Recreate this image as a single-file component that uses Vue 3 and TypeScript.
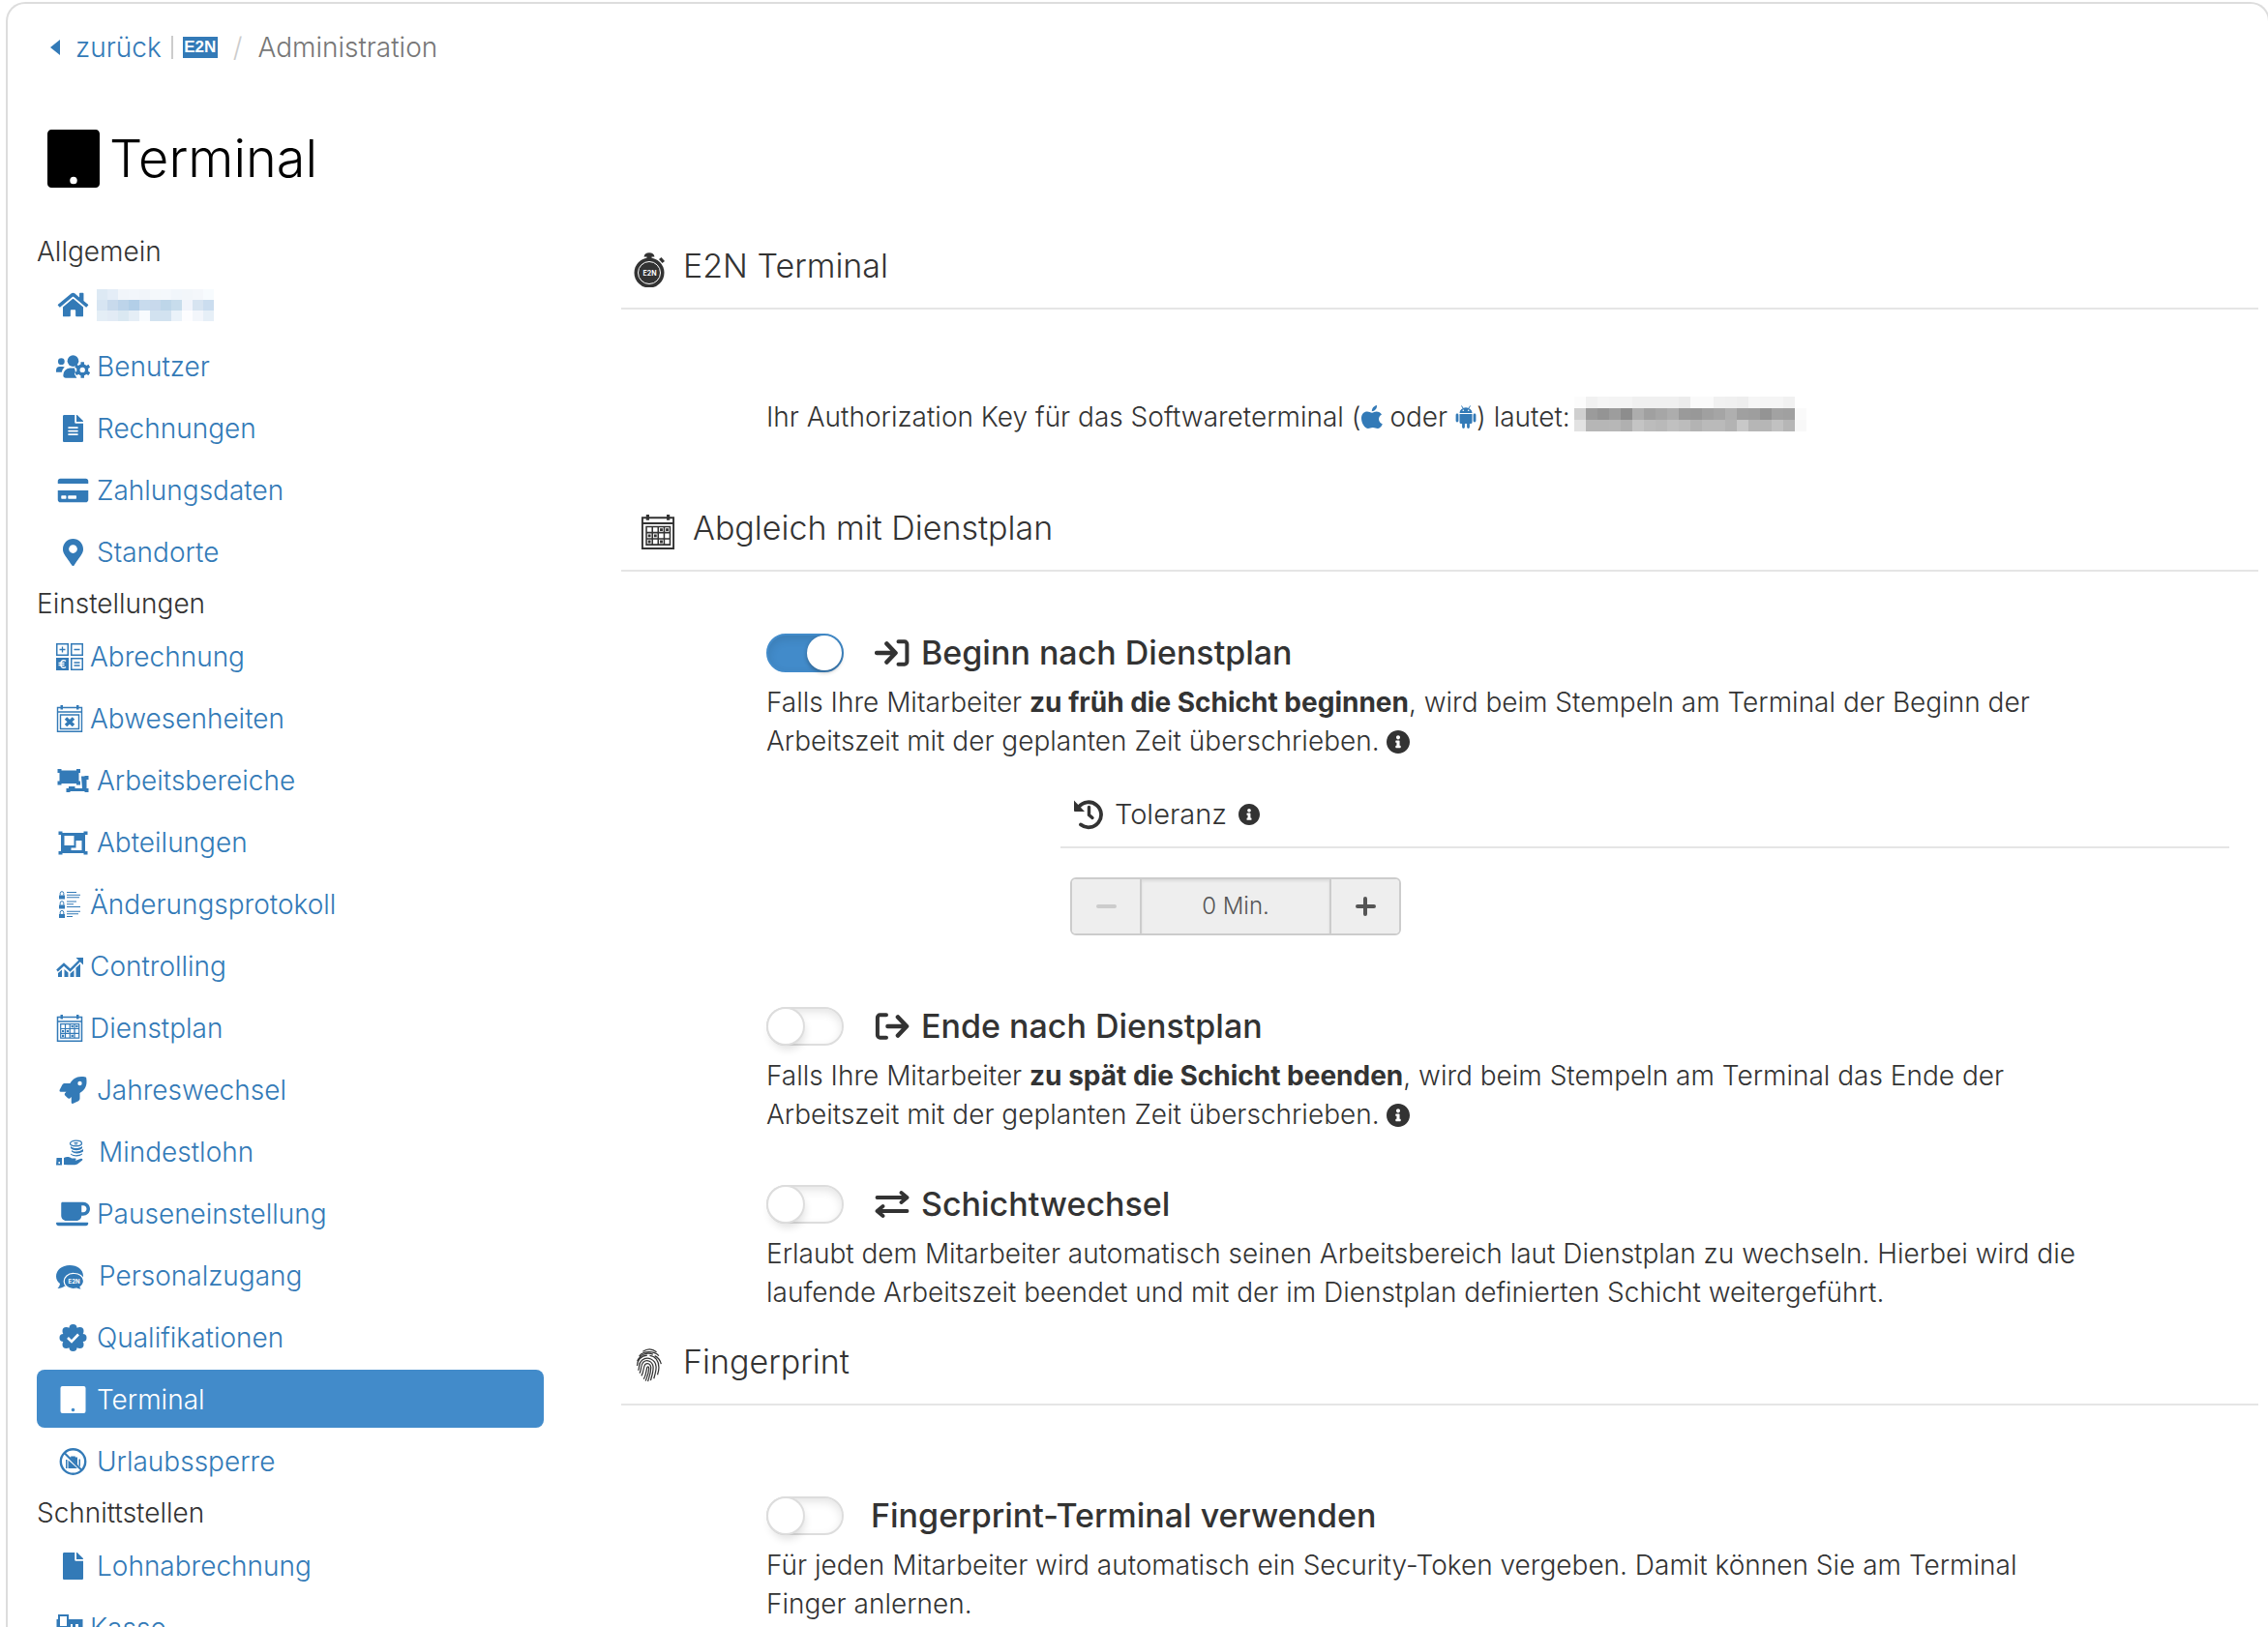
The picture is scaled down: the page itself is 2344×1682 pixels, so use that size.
<script setup lang="ts">
import { ref } from 'vue'

interface NavItem {
  label: string
  icon: string
  kind: 'wide' | 'plain' | 'spaced'
  active?: boolean
}
interface NavGroup {
  title: string
  items: NavItem[]
}

const groups: NavGroup[] = [
  {
    title: 'Allgemein',
    items: [
      { label: '', icon: 'home', kind: 'wide' },
      { label: 'Benutzer', icon: 'users', kind: 'wide' },
      { label: 'Rechnungen', icon: 'invoice', kind: 'wide' },
      { label: 'Zahlungsdaten', icon: 'card', kind: 'wide' },
      { label: 'Standorte', icon: 'pin', kind: 'wide' },
    ],
  },
  {
    title: 'Einstellungen',
    items: [
      { label: 'Abrechnung', icon: 'calc', kind: 'plain' },
      { label: 'Abwesenheiten', icon: 'absence', kind: 'plain' },
      { label: 'Arbeitsbereiche', icon: 'ungroup', kind: 'wide' },
      { label: 'Abteilungen', icon: 'group', kind: 'wide' },
      { label: 'Änderungsprotokoll', icon: 'log', kind: 'plain' },
      { label: 'Controlling', icon: 'chart', kind: 'plain' },
      { label: 'Dienstplan', icon: 'calendar', kind: 'plain' },
      { label: 'Jahreswechsel', icon: 'rocket', kind: 'wide' },
      { label: 'Mindestlohn', icon: 'coins', kind: 'spaced' },
      { label: 'Pauseneinstellung', icon: 'cup', kind: 'wide' },
      { label: 'Personalzugang', icon: 'chat', kind: 'spaced' },
      { label: 'Qualifikationen', icon: 'badge', kind: 'wide' },
      { label: 'Terminal', icon: 'tablet', kind: 'wide', active: true },
      { label: 'Urlaubssperre', icon: 'nobag', kind: 'wide' },
    ],
  },
  {
    title: 'Schnittstellen',
    items: [
      { label: 'Lohnabrechnung', icon: 'file', kind: 'wide' },
      { label: 'Kasse', icon: 'register', kind: 'plain' },
    ],
  },
]

const icons: Record<string, { box: string; body: string }> = {
  home: {
    box: '0 0 576 512',
    body: '<path d="M280.37 148.26L96 300.11V464a16 16 0 0 0 16 16l112.06-.29a16 16 0 0 0 15.92-16V368a16 16 0 0 1 16-16h64a16 16 0 0 1 16 16v95.64a16 16 0 0 0 16 16.05L464 480a16 16 0 0 0 16-16V300L295.67 148.26a12.19 12.19 0 0 0-15.3 0zM571.6 251.47L488 182.56V44.05a12 12 0 0 0-12-12h-56a12 12 0 0 0-12 12v72.61L318.47 43a48 48 0 0 0-61 0L4.34 251.47a12 12 0 0 0-1.6 16.9l25.5 31A12 12 0 0 0 45.15 301l235.22-193.74a12.19 12.19 0 0 1 15.3 0L530.9 301a12 12 0 0 0 16.9-1.6l25.5-31a12 12 0 0 0-1.7-16.93z"/>',
  },
  users: {
    box: '0 0 36 28',
    body: '<circle cx="5.500" cy="8.500" r="3.500"/><circle cx="18" cy="8" r="6"/><path d="M0 20v-2a4 4 0 0 1 4-4h3a4 4 0 0 1 2 .6A9 9 0 0 0 6 20zM7.500 23.500a7.500 7.500 0 0 1 7-8h5a7 7 0 0 1 0 6.500l2.500 4h-12a2.500 2.500 0 0 1-2.500-2.500z"/><circle cx="28" cy="17.500" r="4.500" fill="none" stroke="currentColor" stroke-width="3.500"/><path d="M28 9v3M28 23v3M20.700 13.200l2.600 1.500M32.700 20.300l2.600 1.500M20.700 21.800l2.600-1.500M32.700 14.700l2.600-1.500" stroke="currentColor" stroke-width="3.600"/>',
  },
  invoice: {
    box: '0 0 384 512',
    body: '<path d="M224 136V0H24C10.700 0 0 10.700 0 24v464c0 13.300 10.700 24 24 24h336c13.300 0 24-10.700 24-24V160H248c-13.200 0-24-10.800-24-24zm64 236c0 6.600-5.400 12-12 12H108c-6.600 0-12-5.400-12-12v-8c0-6.600 5.400-12 12-12h168c6.600 0 12 5.400 12 12v8zm0-64c0 6.600-5.400 12-12 12H108c-6.600 0-12-5.400-12-12v-8c0-6.600 5.400-12 12-12h168c6.600 0 12 5.400 12 12v8zm0-72v8c0 6.600-5.400 12-12 12H108c-6.600 0-12-5.400-12-12v-8c0-6.600 5.400-12 12-12h168c6.600 0 12 5.400 12 12zm96-114.100v6.100H256V0h6.100c6.400 0 12.500 2.500 17 7l97.900 98c4.500 4.500 7 10.600 7 16.900z"/>',
  },
  file: {
    box: '0 0 384 512',
    body: '<path d="M224 136V0H24C10.700 0 0 10.700 0 24v464c0 13.300 10.700 24 24 24h336c13.300 0 24-10.700 24-24V160H248c-13.200 0-24-10.800-24-24zm160-14.100v6.100H256V0h6.100c6.400 0 12.500 2.500 17 7l97.900 98c4.500 4.500 7 10.600 7 16.900z"/>',
  },
  card: {
    box: '0 0 576 512',
    body: '<path d="M0 432c0 26.500 21.500 48 48 48h480c26.500 0 48-21.500 48-48V256H0v176zm192-68c0-6.600 5.400-12 12-12h136c6.600 0 12 5.400 12 12v40c0 6.600-5.400 12-12 12H204c-6.600 0-12-5.400-12-12v-40zm-128 0c0-6.600 5.400-12 12-12h72c6.600 0 12 5.400 12 12v40c0 6.600-5.400 12-12 12H76c-6.600 0-12-5.400-12-12v-40zM576 80v48H0V80c0-26.500 21.500-48 48-48h480c26.500 0 48 21.500 48 48z"/>',
  },
  pin: {
    box: '0 0 384 512',
    body: '<path d="M172.268 501.670C26.970 291.031 0 269.413 0 192 0 85.961 85.961 0 192 0s192 85.961 192 192c0 77.413-26.970 99.031-172.268 309.670-9.535 13.774-29.930 13.773-39.464 0zM192 272c44.183 0 80-35.817 80-80s-35.817-80-80-80-80 35.817-80 80 35.817 80 80 80z"/>',
  },
  calc: {
    box: '0 0 28 28',
    body: '<path d="M.75.75h11.500v11.500H.75zM15.750.75h11.500v11.500h-11.500zM15.750 15.750h11.500v11.500h-11.500z" fill="none" stroke="currentColor" stroke-width="1.500"/><path d="M0 15h13v13H0z"/><path d="M3.500 6.500h6M6.500 3.500v6M18.500 6.500h6M18.500 20h6M18.500 23h6" stroke="currentColor" stroke-width="1.300"/><path d="M10 18.500a3.200 3.200 0 0 0-5 1v4a3.200 3.200 0 0 0 5 1M2.500 20.500h6M2.500 22.700h6" fill="none" stroke="#fff" stroke-width="1.300"/>',
  },
  absence: {
    box: '0 0 28 28',
    body: '<path d="M1.500 2.500h25v24.700h-25zM1.500 7h25M4.500 10h19v14.500h-19z" fill="none" stroke="currentColor" stroke-width="1.400"/><path d="M4.500 0h2.500v4.500H4.500zM21 0h2.500v4.500H21z"/><path d="M10 13.500l8 7.500M18 13.500l-8 7.500" stroke="currentColor" stroke-width="3.600"/>',
  },
  calendar: {
    box: '0 0 28 28',
    body: '<path d="M1.500 2.500h25v24.700h-25zM1.500 7h25" fill="none" stroke="currentColor" stroke-width="1.500"/><path d="M4.500 0h2.500v4.500H4.500zM21 0h2.500v4.500H21z"/><path d="M4.700 9.700h19v14.500h-19zM4.700 14.500h19M4.700 19.400h19M9.500 9.700v14.500M14.200 9.700v14.500M19 9.700v14.500" fill="none" stroke="currentColor" stroke-width="1.200"/><path d="M15.600 11h2.200v2.200h-2.200zM20.300 11h2.200v2.200h-2.200zM6 15.900h2.200v2.200H6zM10.800 15.900H13v2.200h-2.200zM6 20.700h2.200v2.200H6zM15.600 20.700h2.200v2.200h-2.200z"/>',
  },
  ungroup: {
    box: '0 0 32 28',
    body: '<path d="M2 3.500h20v13.500H2z"/><path d="M0 2h4v4H0zM19.500 2h4v4h-4zM0 14.500h4v4H0zM19.500 14.500h4v4h-4zM24.500 9.500H30v15.500H11.500v-5H18v2h7.500z"/><path d="M28 9h4v4h-4zM28 22h4v4h-4zM9 22h4v4H9z"/>',
  },
  group: {
    box: '0 0 30 28',
    body: '<path fill-rule="evenodd" d="M2.500 4h25v21h-25zM6 7v10h10V7zM18 12v7.500h-5V22h11V12z"/><path d="M0 2.500h4v3.500H0zM26 2.500h4v3.500h-4zM0 23h4v3.500H0zM26 23h4v3.500h-4z"/>',
  },
  log: {
    box: '0 0 28 28',
    body: '<path d="M3 4.500h6v4H3zM3 14.500h6v4H3zM3 24h6v4H3z"/><path d="M4.200 4.500v-2a1.800 1.800 0 0 1 3.600 0v2M4.200 14.500v-2a1.800 1.800 0 0 1 3.600 0v2M4.200 24.200v-2a1.800 1.800 0 0 1 3.600 0v2" fill="none" stroke="currentColor" stroke-width="1"/><path d="M11 1.500h10M11 4.200h14M11 6.800h13M11 11h10M11 13.700h7M11 16.500h14M11 21.200h14M11 23.800h12M11 26.500h6" stroke="currentColor" stroke-width="1.100"/>',
  },
  chart: {
    box: '0 0 28 28',
    body: '<path d="M1 18.500L8 12l6.500 6L24.500 8" fill="none" stroke="currentColor" stroke-width="2.400"/><path d="M20.500 5H28v7.500zM2 21l4-3.500v7.500H2zM8.500 17l4 3.500V25h-4zM14.500 21.500l4-3.500v7h-4zM20.500 15.500l4.500-4V25h-4.500z"/>',
  },
  rocket: {
    box: '0 0 512 512',
    body: '<path d="M505.120 19.094c-1.189-5.531-6.658-11-12.207-12.188C460.716 0 435.507 0 410.407 0 307.175 0 245.269 55.203 199.052 128H94.838c-16.348.016-35.557 11.875-42.887 26.484L2.516 253.297A28.400 28.400 0 0 0 0 264a24.009 24.009 0 0 0 24.006 24h103.810l-22.475 22.469c-11.365 11.361-12.996 32.258 0 45.250L156.246 406.625c11.156 11.188 32.156 13.156 45.277 0l22.475-22.469V488a24.009 24.009 0 0 0 24.006 24 28.559 28.559 0 0 0 10.707-2.516l98.728-49.390c14.629-7.297 26.508-26.500 26.508-42.860V312.797c72.598-46.313 128.035-108.406 128.035-211.094.093-25.203.093-50.406-6.862-82.609zM384.040 168A40 40 0 1 1 424.050 128 40.023 40.023 0 0 1 384.040 168z"/>',
  },
  coins: {
    box: '0 0 28 28',
    body: '<ellipse cx="20.500" cy="5" rx="6" ry="2.800" fill="none" stroke="currentColor" stroke-width="1.300"/><path d="M18.500 4.500h4M19 6h3" stroke="currentColor" stroke-width="1"/><path d="M15 8c3 2.800 8 2.800 12 0v2c-3 3-9 3-12 0zM16 12c3 2.300 8 2 12-1v2.500c-4 2.500-9 2.500-12 0zM15 15.500c3 2.500 8 2 12 0v1c-3 2.500-9 2.500-12 0z"/><path fill-rule="evenodd" d="M.5 20H6v7.500H0zM2.500 24v2H4v-2zM8 20c3-1.500 6-1 8 .5h3.500c2 0 1 2-.5 2h-4 6l4-1.500c2-1 3 .5 2 1.500l-5 4c-4 1.500-9 .5-14 .5z"/>',
  },
  cup: {
    box: '0 0 640 512',
    body: '<path d="M192 384h192c53 0 96-43 96-96h32c70.600 0 128-57.400 128-128S582.600 32 512 32H120c-13.300 0-24 10.700-24 24v232c0 53 43 96 96 96zM512 96c35.300 0 64 28.700 64 64s-28.700 64-64 64h-32V96h32zm47.700 384H48.300c-47.600 0-61-64-36-64h583.300c25 0 11.800 64-35.900 64z"/>',
  },
  chat: {
    box: '0 0 28 28',
    body: '<path d="M14 3C6 3 0 8 0 14.500c0 3 1.500 5.500 4 7.500-.3 2-1 3.500-2.500 5 3 0 5.500-1 7.500-2.500 1.500.4 3 .5 5 .5 8 0 14-4.500 14-11S22 3 14 3z"/><path d="M18.500 11.500a9.500 8 0 1 0 2.500 15.500c1.800 1 3.500 1.200 5.500 1l-1.500-2.500a8.500 8 0 0 0 3.500-6.500 9.500 8 0 0 0-10-7.500z" stroke="#fff" stroke-width="1.200"/><text x="12.500" y="21.500" font-size="6" font-weight="700" fill="#fff">E2N</text>',
  },
  badge: {
    box: '0 0 28 28',
    body: '<circle cx="14" cy="14" r="11"/><circle cx="14" cy="4" r="4"/><circle cx="21" cy="7" r="4"/><circle cx="24" cy="14" r="4"/><circle cx="21" cy="21" r="4"/><circle cx="14" cy="24" r="4"/><circle cx="7" cy="21" r="4"/><circle cx="4" cy="14" r="4"/><circle cx="7" cy="7" r="4"/><path d="M8.500 14l4 4 7-7.500" fill="none" stroke="#fff" stroke-width="2.600"/>',
  },
  tablet: {
    box: '0 0 26 28',
    body: '<path fill-rule="evenodd" d="M2 0h22a2 2 0 0 1 2 2v24a2 2 0 0 1-2 2H2a2 2 0 0 1-2-2V2a2 2 0 0 1 2-2zM13 22.700a1.800 1.800 0 1 0 0 3.600 1.800 1.800 0 0 0 0-3.600z"/>',
  },
  nobag: {
    box: '0 0 28 28',
    body: '<circle cx="14" cy="14" r="12.700" fill="none" stroke="currentColor" stroke-width="2.400"/><path d="M6.500 12H8v9H6.500zM9 12.500l9.500 8.500H9zM10.500 9.500h1.200V8.500h4.600v1h2.200v8zM20 11.500h1.500v8l-1.500-1.500z"/><path d="M5 5l18 18" stroke="currentColor" stroke-width="2.200"/>',
  },
  register: {
    box: '0 0 28 28',
    body: '<path d="M3 1h9v12H3zM1.500 5v22h25V6H12" fill="none" stroke="currentColor" stroke-width="2"/><path d="M12 5h15v5H12z"/><path d="M12 10h3v3h-3zM17 10h3v3h-3zM23 10h3v3h-3zM4 16h21v2H4z"/>',
  },
  stopwatch: {
    box: '0 0 32 36',
    body: '<circle cx="16" cy="21" r="15.500"/><path d="M10.500 4.500C11 1.500 13 .3 16 .3s5 1.200 5.500 4.200zM13.500 3h5v4h-5zM26 7l2.500-2L32 9l-2.500 2z"/><circle cx="16" cy="21" r="11.500" fill="none" stroke="#fff" stroke-width="1"/><text x="9.500" y="23.500" font-size="7" font-weight="700" fill="#fff">E2N</text>',
  },
  fingerprint: {
    box: '0 0 28 38',
    body: '<g fill="none" stroke="currentColor" stroke-width="1.300"><path d="M7 3.500c5-3.500 10-3.500 15 .5M3 8.500C8 2.500 19 2.500 24.500 8M1 14C4 6 12 4 18 6.500M20 8c4 2 6 5 7 9M.8 19c0-6 4-11 11-11.500M14.500 7.800c6 .5 10 6 10 13 0 2.500-.5 5-1.500 8M2 24c2-4-.5-7 4-11 6-5 15-1 15.500 7 .2 4-1 8-2.500 13M3.500 27c2.500-4.500.5-8 4-12 4-3.500 10-1 10.800 5 .4 5-1.500 10-2.800 15M5.500 30c3-5 1.500-9 4-12.500 3-2.500 6 0 6.300 3 .2 6-1.800 10-3.300 15.500M8 33.500c3-5 2.500-10 3.800-13 1.500-1.500 2 .5 1.800 2-.2 5-1.800 8-3.600 13"/></g>',
  },
  login: {
    box: '0 0 36 28',
    body: '<path d="M2.200 14H20M12.500 4.500l9 9.500-9 9.500" fill="none" stroke="currentColor" stroke-width="4.600" stroke-linejoin="round" stroke-linecap="round"/><path d="M24.500 2.300h6.300a2.600 2.600 0 0 1 2.600 2.600v18.200a2.600 2.600 0 0 1-2.600 2.600h-6.300" fill="none" stroke="currentColor" stroke-width="4" stroke-linecap="round"/>',
  },
  logout: {
    box: '0 0 36 28',
    body: '<path d="M13.500 14h18M24 4.500l9 9.500-9 9.500" fill="none" stroke="currentColor" stroke-width="4.600" stroke-linejoin="round" stroke-linecap="round"/><path d="M12 2.300H5.500a2.600 2.600 0 0 0-2.600 2.600v18.200a2.600 2.600 0 0 0 2.600 2.600H12" fill="none" stroke="currentColor" stroke-width="4" stroke-linecap="round"/>',
  },
  swap: {
    box: '0 0 36 28',
    body: '<path d="M2.500 7H32M27.500 2l6 5-6 5M33.500 21H4M8.500 16l-6 5 6 5" fill="none" stroke="currentColor" stroke-width="3.800" stroke-linejoin="round" stroke-linecap="round"/>',
  },
  history: {
    box: '0 0 30 32',
    body: '<path d="M5 8a13 13 0 1 1 2 18.500" fill="none" stroke="currentColor" stroke-width="3.800" stroke-linecap="round"/><path d="M0 1.500v10.500a1 1 0 0 0 1 1h10z"/><path d="M15.500 8.500v8l3.500 3" fill="none" stroke="currentColor" stroke-width="3.400" stroke-linecap="round"/>',
  },
  info: {
    box: '8 8 496 496',
    body: '<path d="M256 8C119.043 8 8 119.083 8 256c0 136.997 111.043 248 248 248s248-111.003 248-248C504 119.083 392.957 8 256 8zm0 110c23.196 0 42 18.804 42 42s-18.804 42-42 42-42-18.804-42-42 18.804-42 42-42zm56 254c0 6.627-5.373 12-12 12h-88c-6.627 0-12-5.373-12-12v-24c0-6.627 5.373-12 12-12h12v-64h-12c-6.627 0-12-5.373-12-12v-24c0-6.627 5.373-12 12-12h64c6.627 0 12 5.373 12 12v100h12c6.627 0 12 5.373 12 12v24z"/>',
  },
  apple: {
    box: '0 0 22 24',
    body: '<path d="M16 0c.3 3.500-2 6-5.200 6.200C10.800 3 13 .6 16 0zM15.500 6.600c2.500 0 4.300 1.200 5.500 2.900-4.300 2.500-3.700 8 .8 10-1.300 2.800-3 4.500-5 4.500-1.800 0-2.800-1-5-1s-3.200 1-4.800 1C3.500 24 0 18.500 0 13.600 0 9 2.800 6.600 6 6.600c2 0 3.500 1.100 5 1.100s2.700-1.100 4.500-1.100z"/>',
  },
  android: {
    box: '0 0 21 24',
    body: '<path d="M4 8a6.500 5.800 0 0 1 13 0zM4 9h13v8.500a1.500 1.500 0 0 1-1.500 1.500h-10A1.500 1.500 0 0 1 4 17.500z"/><path d="M1.500 10v6M19.500 10v6M8 18v4.500M13 18v4.500" stroke="currentColor" stroke-width="2.800" stroke-linecap="round"/><path d="M6 .5l1.500 2.500M15 .5L13.500 3" stroke="currentColor" stroke-width="1"/><circle cx="7.800" cy="5.300" r=".8" fill="#fff"/><circle cx="13.200" cy="5.300" r=".8" fill="#fff"/>',
  },
}

const nameCells = [
  '#dde9f4', '#e4edf7', '#f1f5fa', '#f2f6fb', '#f1f5fa', '#f4f8fb', '#f4f8fc', '#f1f6fb', '#f2f6fa', '#f4f7fb', '#f7fbfe',
  '#d7e5f2', '#c8daec', '#bdd4ea', '#b3cfe8', '#c8dbed', '#c8d9ec', '#bed6e9', '#c7dcec', '#f1f4fb', '#d7e4f1', '#cbddef',
  '#e4eef6', '#e2ebf5', '#dae8f2', '#e5eef6', '#f8fbfe', '#d2e2f0', '#d2e2f0', '#eaf2f9', '#fdfdff', '#f3f6fb', '#e6eff7',
]
const keyCells = [
  '#fcfcfc', '#f1f1f1', '#f5f5f5', '#f4f4f4', '#f4f4f4', '#f0f0f0', '#f0f0f0', '#f0f0f0', '#f0f0f0', '#ececec', '#fafafa', '#fafafa', '#f1f1f1', '#f0f0f0', '#eeeeee', '#f6f6f6', '#f5f5f5', '#f5f5f5', '#f1f1f1', '#ffffff',
  '#cfcfcf', '#9b9b9b', '#949494', '#9d9d9d', '#8d8d8d', '#adadad', '#a0a0a0', '#a6a6a6', '#adadad', '#9a9a9a', '#989898', '#a0a0a0', '#a5a5a5', '#afafaf', '#a0a0a0', '#9e9e9e', '#949494', '#a2a2a2', '#a0a0a0', '#fafafa',
  '#e2e2e2', '#b6b6b6', '#b6b6b6', '#b7b7b7', '#b0b0b0', '#c4c4c4', '#bcbcbc', '#b9b9b9', '#c0c0c0', '#bcbcbc', '#b3b3b3', '#bababa', '#bababa', '#b3b3b3', '#c8c8c8', '#b6b6b6', '#b6b6b6', '#c1c1c1', '#b6b6b6', '#f8f8f8',
]

const beginBySchedule = ref(true)
const endBySchedule = ref(false)
const shiftChange = ref(false)
const fingerprint = ref(false)
const tolerance = ref(0)
</script>

<template>
  <div class="frame">
    <nav class="crumbs" aria-label="Breadcrumb">
      <a href="#" class="back"><span class="caret"></span>zurück</a>
      <span class="bar"></span>
      <a href="#" class="logo">E2N</a>
      <span class="slash">/</span>
      <span class="here">Administration</span>
    </nav>

    <h1 class="title">
      <svg class="title-icon" :viewBox="icons.tablet.box" preserveAspectRatio="none" v-html="icons.tablet.body"></svg>
      Terminal
    </h1>

    <div class="columns">
      <nav class="side" aria-label="Administration">
        <template v-for="g in groups" :key="g.title">
          <h2 class="side-title">{{ g.title }}</h2>
          <a v-for="it in g.items" :key="it.icon" href="#" class="item" :class="[it.kind, { active: it.active }]">
            <svg class="icon" :viewBox="icons[it.icon].box" v-html="icons[it.icon].body"></svg>
            <span v-if="it.label">{{ it.label }}</span>
            <span v-else class="mosaic name"><i v-for="(c, i) in nameCells" :key="i" :style="{ background: c }"></i></span>
          </a>
        </template>
      </nav>

      <main class="main">
        <section>
          <h2 class="head">
            <svg class="watch" :viewBox="icons.stopwatch.box" v-html="icons.stopwatch.body"></svg>
            E2N Terminal
          </h2>
          <div class="body key-body">
            <p>
              Ihr Authorization Key für das Softwareterminal (<a href="#" aria-label="iOS"><svg class="apple" :viewBox="icons.apple.box" v-html="icons.apple.body"></svg></a>
              oder <a href="#" aria-label="Android"><svg class="android" :viewBox="icons.android.box" v-html="icons.android.body"></svg></a>) lautet:<span class="mosaic token"><i v-for="(c, i) in keyCells" :key="i" :style="{ background: c }"></i></span>
            </p>
          </div>
        </section>

        <section>
          <h2 class="head plan">
            <svg class="cal" :viewBox="icons.calendar.box" v-html="icons.calendar.body"></svg>
            Abgleich mit Dienstplan
          </h2>
          <div class="body plan-body">
            <div class="option">
              <label class="switch-row">
                <input v-model="beginBySchedule" type="checkbox" class="switch" />
                <svg class="lead" :viewBox="icons.login.box" v-html="icons.login.body"></svg>
                <span class="option-title">Beginn nach Dienstplan</span>
              </label>
              <p class="text">
                Falls Ihre Mitarbeiter <strong>zu früh die Schicht beginnen</strong>, wird beim Stempeln am Terminal der Beginn der
                Arbeitszeit mit der geplanten Zeit überschrieben. <svg class="info" :viewBox="icons.info.box" v-html="icons.info.body"></svg>
              </p>
              <div class="tolerance">
                <h3 class="tol-head">
                  <svg class="hist" :viewBox="icons.history.box" v-html="icons.history.body"></svg>
                  <label for="tol">Toleranz</label>
                  <svg class="info small" :viewBox="icons.info.box" v-html="icons.info.body"></svg>
                </h3>
                <div class="stepper">
                  <button type="button" aria-label="Weniger" :disabled="tolerance === 0" @click="tolerance--"><span class="minus"></span></button>
                  <input id="tol" type="text" :value="`${tolerance} Min.`" readonly />
                  <button type="button" aria-label="Mehr" @click="tolerance++"><span class="plus"></span></button>
                </div>
              </div>
            </div>

            <div class="option">
              <label class="switch-row">
                <input v-model="endBySchedule" type="checkbox" class="switch" />
                <svg class="lead" :viewBox="icons.logout.box" v-html="icons.logout.body"></svg>
                <span class="option-title">Ende nach Dienstplan</span>
              </label>
              <p class="text">
                Falls Ihre Mitarbeiter <strong>zu spät die Schicht beenden</strong>, wird beim Stempeln am Terminal das Ende der
                Arbeitszeit mit der geplanten Zeit überschrieben. <svg class="info" :viewBox="icons.info.box" v-html="icons.info.body"></svg>
              </p>
            </div>

            <div class="option">
              <label class="switch-row">
                <input v-model="shiftChange" type="checkbox" class="switch" />
                <svg class="lead" :viewBox="icons.swap.box" v-html="icons.swap.body"></svg>
                <span class="option-title">Schichtwechsel</span>
              </label>
              <p class="text">
                Erlaubt dem Mitarbeiter automatisch seinen Arbeitsbereich laut Dienstplan zu wechseln. Hierbei wird die
                laufende Arbeitszeit beendet und mit der im Dienstplan definierten Schicht weitergeführt.
              </p>
            </div>
          </div>
        </section>

        <section>
          <h2 class="head">
            <svg class="finger" :viewBox="icons.fingerprint.box" v-html="icons.fingerprint.body"></svg>
            Fingerprint
          </h2>
          <div class="body finger-body">
            <div class="option">
              <label class="switch-row">
                <input v-model="fingerprint" type="checkbox" class="switch" />
                <span class="option-title">Fingerprint-Terminal verwenden</span>
              </label>
              <p class="text">
                Für jeden Mitarbeiter wird automatisch ein Security-Token vergeben. Damit können Sie am Terminal
                Finger anlernen.
              </p>
            </div>
          </div>
        </section>
      </main>
    </div>
  </div>
</template>

<style>
html,
body {
  background: #fff;
  overflow: hidden;
}
body {
  height: 100vh;
}
</style>

<style scoped>
.frame {
  box-sizing: border-box;
  margin: 2px -2px 0 6px;
  padding: 26px 10px 0 30px;
  border: 2px solid #ddd;
  border-bottom: 0;
  border-radius: 20px 20px 0 0;
  font: 300 28px/40px Inter, 'Liberation Sans', sans-serif;
  color: #333;
}
h1,
h2,
h3,
p {
  margin: 0;
  font-weight: 300;
}
a {
  color: #337ab7;
  text-decoration: none;
}
svg {
  fill: currentColor;
  flex: none;
}
.crumbs {
  display: flex;
  align-items: center;
  height: 38px;
  padding-left: 14px;
}
.back {
  display: flex;
  align-items: center;
  gap: 16px;
}
.caret {
  border: solid transparent;
  border-width: 8px 10px 8px 0;
  border-right-color: #337ab7;
}
.bar {
  width: 2px;
  height: 24px;
  margin: 0 10px;
  background: #ccc;
}
.logo {
  width: 36px;
  height: 22px;
  background: #337ab7;
  color: #fff;
  font: 700 17px/22px 'Liberation Sans', sans-serif;
  text-align: center;
}
.slash {
  margin: 0 16px;
  color: #ccc;
}
.here {
  color: #777;
}
.title {
  display: flex;
  align-items: center;
  gap: 10px;
  height: 64px;
  margin: 64px 0 0 11px;
  font-size: 54px;
  line-height: 64px;
  color: #000;
}
.title-icon {
  width: 54px;
  height: 60px;
}
.columns {
  display: flex;
  align-items: flex-start;
  gap: 80px;
  margin-top: 44px;
}
.side {
  flex: none;
  display: flex;
  flex-direction: column;
  gap: 4px;
  width: 524px;
}
.side-title {
  font-size: 28px;
  line-height: 40px;
}
.item {
  box-sizing: border-box;
  display: flex;
  align-items: center;
  gap: 7px;
  height: 60px;
  padding: 2px 0 0 20px;
  border-radius: 8px;
}
.item.active {
  background: #428bca;
  color: #fff;
}
.icon {
  width: 35px;
  height: 28px;
}
.plain .icon,
.spaced .icon {
  width: 28px;
}
.spaced {
  gap: 16px;
}
.mosaic {
  display: inline-grid;
}
.name {
  grid-template: repeat(3, 11px) / repeat(11, 11px);
}
.token {
  grid-template: repeat(3, 12px) / repeat(20, 12px);
  margin: 0 0 2px 4px;
  vertical-align: text-bottom;
}
.main {
  flex: 1;
  min-width: 0;
  padding-top: 10px;
}
.head {
  display: flex;
  align-items: center;
  gap: 18px;
  height: 50px;
  padding: 0 0 18px 12px;
  border-bottom: 2px solid #e5e5e5;
  font-size: 34px;
  line-height: 50px;
}
.plan {
  padding-left: 20px;
}
.head svg {
  width: 34px;
  height: 36px;
  margin-top: 8px;
}
.head .cal {
  width: 36px;
}
.body {
  padding-left: 150px;
}
.key-body {
  padding-top: 90px;
  padding-bottom: 70px;
}
.plan-body {
  padding-top: 64px;
  padding-bottom: 27px;
}
.finger-body {
  padding-top: 94px;
}
.apple,
.android {
  width: 22px;
  height: 24px;
  vertical-align: -2px;
}
.option + .option {
  margin-top: 53px;
}
.switch-row {
  display: flex;
  align-items: center;
  height: 40px;
  margin-bottom: 11px;
}
.switch {
  appearance: none;
  flex: none;
  box-sizing: border-box;
  width: 80px;
  height: 40px;
  margin: 0 28px 0 0;
  border: 2px solid #ddd;
  border-radius: 20px;
  background: #fff;
  box-shadow: inset 0 4px 10px rgba(0, 0, 0, 0.1);
}
.switch::before {
  content: '';
  display: block;
  width: 36px;
  height: 36px;
  border-radius: 50%;
  background: #fff;
  box-shadow: 0 0 0 2px #ddd, 2px 6px 8px rgba(0, 0, 0, 0.12);
}
.switch:checked {
  border-color: #428bca;
  background: #428bca;
}
.switch:checked::before {
  margin-left: 40px;
  box-shadow: 0 2px 4px rgba(0, 0, 0, 0.3);
}
.lead {
  width: 36px;
  height: 28px;
  margin: 0 12px 0 4px;
}
.option-title {
  font-size: 34px;
  font-weight: 500;
  line-height: 40px;
}
.text {
  padding-right: 176px;
}
strong {
  font-weight: 700;
}
.info {
  width: 24px;
  height: 24px;
  vertical-align: -3px;
}
.small {
  width: 22px;
  height: 22px;
}
.tolerance {
  margin: 36px 30px 74px 304px;
}
.tol-head {
  display: flex;
  align-items: center;
  gap: 12px;
  padding: 0 0 13px 14px;
  border-bottom: 2px solid #e5e5e5;
  font-size: 29px;
  line-height: 40px;
}
.hist {
  width: 30px;
  height: 32px;
}
.stepper {
  display: flex;
  box-sizing: border-box;
  width: 342px;
  height: 60px;
  margin: 30px 0 0 10px;
  border: 2px solid #ccc;
  border-radius: 6px;
  overflow: hidden;
}
.stepper button {
  display: flex;
  align-items: center;
  justify-content: center;
  width: 70px;
  padding: 0;
  border: 0;
  background: #eee;
  color: #555;
}
.stepper button:disabled {
  color: #ccc;
}
.stepper input {
  flex: 1;
  min-width: 0;
  padding: 0;
  border: solid #ccc;
  border-width: 0 2px;
  background: #eee;
  box-shadow: inset 0 2px 3px rgba(0, 0, 0, 0.08);
  font: 300 24px/40px Inter, 'Liberation Sans', sans-serif;
  color: #555;
  text-align: center;
}
.minus,
.plus {
  width: 21px;
  height: 4px;
  border-radius: 2px;
  background: currentColor;
}
.plus::before {
  content: '';
  display: block;
  width: 4px;
  height: 20px;
  margin: -8px auto 0;
  border-radius: 2px;
  background: currentColor;
}
</style>
